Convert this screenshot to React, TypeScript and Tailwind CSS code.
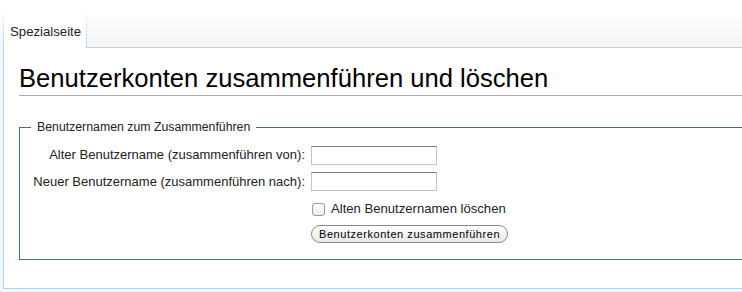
export default function App() {
  return (
    <div className="relative w-[742px] h-[292px] overflow-hidden bg-[#f6f6f6] font-['Liberation_Sans',Arial,sans-serif] text-[#222]">
      {/* Tabs */}
      <div className="flex h-[48px] bg-gradient-to-b from-white from-[25%] to-[#f3f3f3]">
        <div className="w-[3px]" />
        <div className="w-px bg-gradient-to-b from-transparent from-[20%] to-[#a7d7f9]" />
        <div className="w-[82px] bg-white flex items-end pb-[6px] pl-[6px] text-[13.2px]">
          Spezialseite
        </div>
        <div className="w-px bg-gradient-to-b from-transparent from-[20%] to-[#a7d7f9]" />
        <div className="flex-1 border-b border-[#a7d7f9]" />
      </div>

      {/* Content */}
      <div className="ml-[3px] h-[241px] bg-white border-l border-b border-[#a7d7f9] pl-[15px]">
        <h1 className="pt-[15px] pb-[2px] text-[25.6px] leading-[30px] text-black border-b border-[#aaa]">
          Benutzerkonten zusammenführen und löschen
        </h1>

        <fieldset className="mt-[22px] h-[142px] border border-r-0 border-[#2f6fab] pl-[12px] pr-0 pt-[5px] text-[13px]">
          <legend className="px-[6px] ml-[-1px] text-[12.3px]">Benutzernamen zum Zusammenführen</legend>
          <div className="grid grid-cols-[273px_auto] gap-x-[6px] gap-y-[7px] items-center mt-[4px] whitespace-nowrap">
            <label className="text-right">Alter Benutzername (zusammenführen von):</label>
            <input className="w-[126px] h-[19px] border border-[#c4c4c4] border-t-[#7c7c7c] outline-none" />
            <label className="text-right">Neuer Benutzername (zusammenführen nach):</label>
            <input className="w-[126px] h-[19px] border border-[#c4c4c4] border-t-[#7c7c7c] outline-none" />
            <div className="col-start-2 flex flex-col items-start gap-[6px] mt-[1px]">
              <label className="flex items-center gap-[6px]">
                <span className="w-[13px] h-[13px] ml-[1px] rounded-[3px] border border-[#9a9a9a] bg-gradient-to-b from-white to-[#ececec]" />
                <span className="text-[13.1px]">Alten Benutzernamen löschen</span>
              </label>
              <button className="h-[18px] px-[7px] rounded-full border border-[#8a8a8a] bg-gradient-to-b from-white to-[#e8e8e8] text-[11px] leading-[15px] text-black tracking-[0.55px]">
                Benutzerkonten zusammenführen
              </button>
            </div>
          </div>
        </fieldset>
      </div>
    </div>
  );
}
